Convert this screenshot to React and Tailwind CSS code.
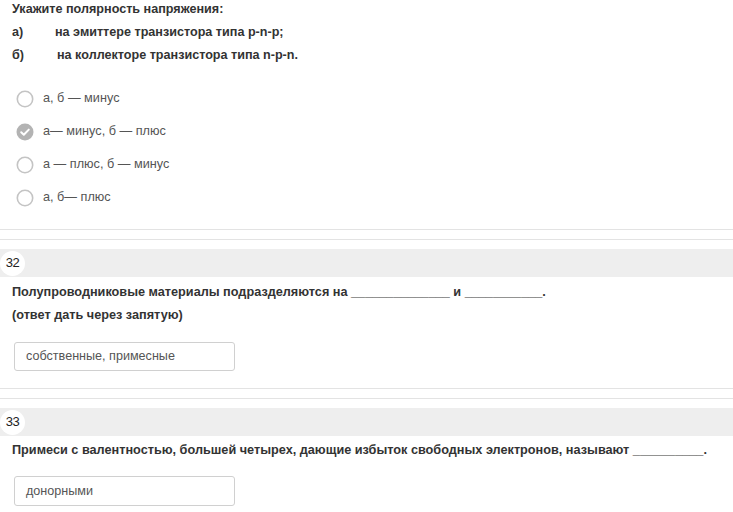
import React from "react";

function Radio({ checked }) {
  if (checked) {
    return (
      <svg width="18" height="18" viewBox="0 0 18 18" className="shrink-0">
        <circle cx="9" cy="9" r="8.5" fill="#b3b3b3" />
        <path d="M5.2 9.3 L7.8 11.8 L12.8 6.6" fill="none" stroke="#fff" strokeWidth="2" strokeLinecap="round" strokeLinejoin="round" />
      </svg>
    );
  }
  return (
    <svg width="18" height="18" viewBox="0 0 18 18" className="shrink-0">
      <circle cx="9" cy="9" r="7.7" fill="#fff" stroke="#c4c4c4" strokeWidth="1.6" />
    </svg>
  );
}

function Header({ num }) {
  return (
    <div className="h-[28px] bg-[#eeeeee] flex items-center">
      <div className="w-[25px] h-[25px] rounded-full bg-white flex items-center justify-center text-[13px] text-[#222] tracking-[-0.5px]">
        {num}
      </div>
    </div>
  );
}

function Lines() {
  return (
    <>
      <div className="h-px bg-[#e3e3e3]" />
      <div className="h-px bg-[#e3e3e3] mt-[9px]" />
    </>
  );
}

export default function App() {
  const options = [
    { t: "а, б — минус", c: false },
    { t: "а— минус, б — плюс", c: true },
    { t: "а — плюс, б — минус", c: false },
    { t: "а, б— плюс", c: false },
  ];
  return (
    <div className="w-[733px] h-[512px] overflow-hidden bg-white font-['Liberation_Sans',Arial,sans-serif] text-[#333]">
      <div className="pl-[12px] text-[12.6px] font-bold">
        <div className="h-[18px] leading-[18px]">Укажите полярность напряжения:</div>
        <div className="h-[18px] leading-[18px] mt-[5px] flex">
          <span className="w-[43px]">а)</span>
          <span>на эмиттере транзистора типа p-n-p;</span>
        </div>
        <div className="h-[18px] leading-[18px] mt-[5px] flex">
          <span className="w-[45px]">б)</span>
          <span>на коллекторе транзистора типа n-p-n.</span>
        </div>
      </div>

      <div className="mt-[23px] pl-[16px] flex flex-col gap-[9px]">
        {options.map((o, i) => (
          <div key={i} className="h-[24px] flex items-center gap-[9px] text-[12.7px] text-[#555]">
            <Radio checked={o.c} />
            <span>{o.t}</span>
          </div>
        ))}
      </div>

      <div className="mt-[19px]">
        <Lines />
      </div>
      <div className="mt-[9px]">
        <Header num="32" />
      </div>
      <div className="pl-[12px] text-[12.7px] font-bold mt-[6px]">
        <div className="h-[18px] leading-[18px]">
          Полупроводниковые материалы подразделяются на ______________ и ___________.
        </div>
        <div className="h-[18px] leading-[18px] mt-[5px]">(ответ дать через запятую)</div>
      </div>
      <div className="pl-[14px] mt-[18px]">
        <div className="w-[221px] h-[29px] border border-[#d0d0d0] rounded-[3px] flex items-center pl-[11px] text-[12.6px] text-[#555]">
          собственные, примесные
        </div>
      </div>

      <div className="mt-[17px]">
        <Lines />
      </div>
      <div className="mt-[9px]">
        <Header num="33" />
      </div>
      <div className="pl-[12px] text-[12.7px] font-bold mt-[5px]">
        <div className="h-[18px] leading-[18px]">
          Примеси с валентностью, большей четырех, дающие избыток свободных электронов, называют __________.
        </div>
      </div>
      <div className="pl-[14px] mt-[17px]">
        <div className="w-[221px] h-[30px] border border-[#d0d0d0] rounded-[3px] flex items-center pl-[11px] text-[12.6px] text-[#555]">
          донорными
        </div>
      </div>
    </div>
  );
}
